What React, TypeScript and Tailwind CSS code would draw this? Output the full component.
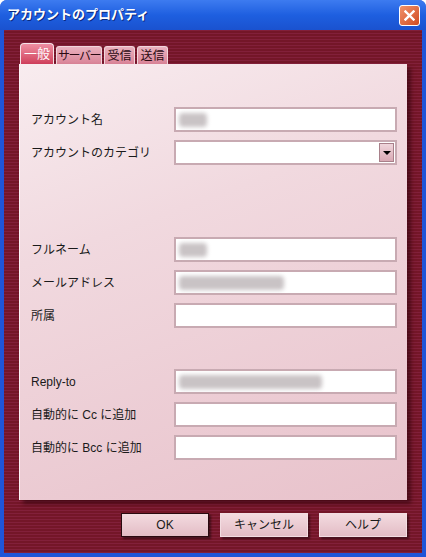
const font = "font-['Liberation_Sans','Noto_Sans_CJK_JP',sans-serif]";

const Blur = ({ w }: { w: number }) => (
  <div className="h-full flex items-center pl-[3px]">
    <div className="h-[14px] bg-[#c9c3c5] blur-[2px] rounded-sm" style={{ width: w }} />
  </div>
);

const Field = ({ label, blur, select }: { label: string; blur?: number; select?: boolean }) => (
  <div className="flex items-center h-[25px]">
    <div className="w-[143px] text-[12px] text-[#1a1a1a]">{label}</div>
    <div className="relative flex-1 h-full bg-white border-2 border-[#c8aab2] shadow-[inset_0_0_0_1px_#fff]">
      {blur ? <Blur w={blur} /> : null}
      {select ? (
        <div className="absolute right-[1px] top-[1px] bottom-[1px] w-[15px] flex items-center justify-center bg-gradient-to-b from-[#f0d6dc] to-[#d9a9b4] border border-[#a8808a]">
          <div className="w-0 h-0 border-l-[4px] border-r-[4px] border-t-[4px] border-l-transparent border-r-transparent border-t-black" />
        </div>
      ) : null}
    </div>
  </div>
);

const Tab = ({ label, w, active }: { label: string; w: string; active?: boolean }) => (
  <div
    className={`${w} whitespace-nowrap ${
      active
        ? "h-[21px] flex items-center justify-center text-[13px] text-white rounded-t-[4px] border border-b-0 border-[#f7e3e8] bg-gradient-to-b from-[#ee8ea2] to-[#cf3d5b]"
        : "h-[18px] flex items-center justify-center text-[12px] text-[#2b0a12] rounded-t-[3px] border border-b-0 border-[#f2d6dc] bg-gradient-to-b from-[#eab2bf] to-[#d98397]"
    }`}
  >
    {label}
  </div>
);

const Btn = ({ label, def }: { label: string; def?: boolean }) => (
  <div
    className={`w-[88px] h-[24px] flex items-center justify-center text-[12px] text-[#1a1a1a] bg-gradient-to-b from-[#f3dbe0] to-[#e3bcc5] shadow-[2px_2px_2px_rgba(0,0,0,0.45)] ${
      def ? "border border-[#2a0a10]" : "border border-[#f3dde2]"
    }`}
  >
    {label}
  </div>
);

export default function App() {
  return (
    <div className={`${font} w-[426px] h-[557px] flex flex-col bg-[#1f55d8] rounded-t-[7px] overflow-hidden`}>
      <div className="h-[30px] flex items-center justify-between pl-[7px] pr-[6px] bg-gradient-to-b from-[#3d7bf0] via-[#1e5fe0] to-[#1a52cf]">
        <div className="text-[13px] font-bold text-white [text-shadow:1px_1px_0_#0a2a80]">アカウントのプロパティ</div>
        <div className="w-[21px] h-[21px] rounded-[3px] border border-white bg-gradient-to-br from-[#f0926a] to-[#d04a1e] flex items-center justify-center">
          <svg width="11" height="11" viewBox="0 0 11 11">
            <path d="M1.5 1.5 L9.5 9.5 M9.5 1.5 L1.5 9.5" stroke="white" strokeWidth="2.4" strokeLinecap="square" />
          </svg>
        </div>
      </div>
      <div className="flex-1 mx-[4px] mb-[4px] flex flex-col pt-[13px] px-[15px] bg-[#7c1a2f] bg-[repeating-linear-gradient(180deg,#82203a_0px,#82203a_1px,#741628_1px,#741628_3px)]">
        <div className="flex items-end gap-[2px] h-[21px] pl-[1px]">
          <Tab label="一般" w="w-[34px]" active />
          <Tab label="サーバー" w="w-[46px] tracking-[-1.5px]" />
          <Tab label="受信" w="w-[31px]" />
          <Tab label="送信" w="w-[31px]" />
        </div>
        <div className="h-[436px] flex flex-col pl-[11px] pr-[10px] pt-[43px] border-l border-[#fdf4f6] bg-[linear-gradient(160deg,#f8ecef_0%,#f1d9df_35%,#e8c2cb_100%)] shadow-[4px_4px_4px_rgba(40,0,10,0.55)]">
          <div className="flex flex-col gap-[8px]">
            <Field label="アカウント名" blur={28} />
            <Field label="アカウントのカテゴリ" select />
          </div>
          <div className="flex flex-col gap-[8px] mt-[72px]">
            <Field label="フルネーム" blur={28} />
            <Field label="メールアドレス" blur={105} />
            <Field label="所属" />
          </div>
          <div className="flex flex-col gap-[8px] mt-[41px]">
            <Field label="Reply-to" blur={143} />
            <Field label="自動的に Cc に追加" />
            <Field label="自動的に Bcc に追加" />
          </div>
        </div>
        <div className="flex justify-end gap-[11px] mt-[13px]">
          <Btn label="OK" def />
          <Btn label="キャンセル" />
          <Btn label="ヘルプ" />
        </div>
      </div>
    </div>
  );
}
